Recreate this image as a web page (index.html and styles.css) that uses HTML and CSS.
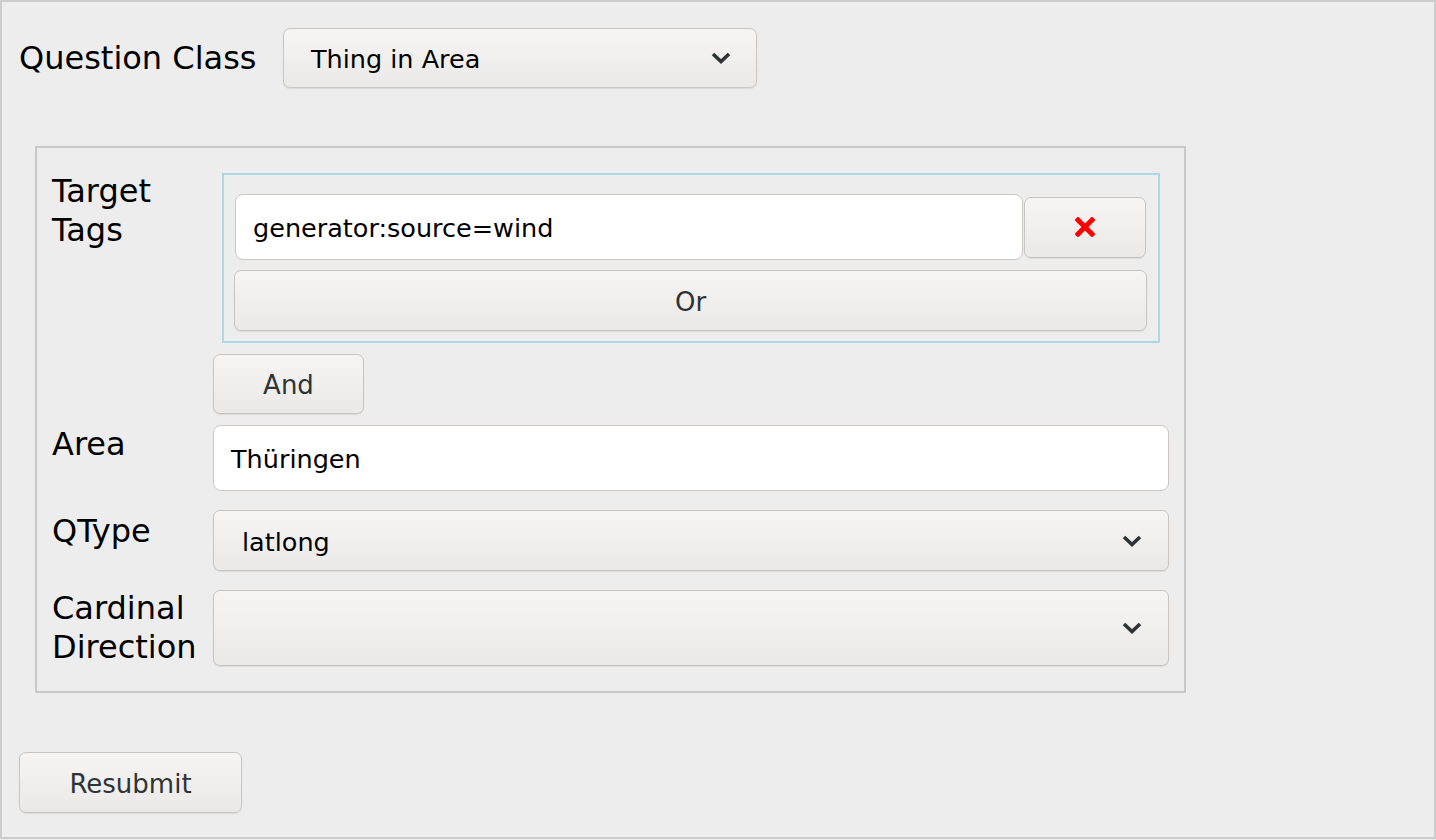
FILE: index.html
```html
<!DOCTYPE html>
<html>
<head>
<meta charset="utf-8">
<title>Question</title>
<link rel="stylesheet" href="styles.css">
</head>
<body>
<div class="window">
  <div class="top-row">
    <span class="label qc-label">Question Class</span>
    <div class="select qc-select">
      <span class="select-text">Thing in Area</span>
      <svg class="chevron" width="22" height="14" viewBox="0 0 22 14"><path d="M3 3 L11 10.5 L19 3" fill="none" stroke="#2e3436" stroke-width="3.6"/></svg>
    </div>
  </div>
  <div class="panel">
    <div class="form-grid">
      <div class="label lbl-tags">Target<br>Tags</div>
      <div class="tags-box">
        <div class="tag-row">
          <div class="field tag-field">generator:source=wind</div>
          <div class="btn del-btn">
            <svg width="20" height="20" viewBox="0 0 20 20"><path d="M3 3 L17 17 M17 3 L3 17" stroke="#ff0000" stroke-width="5" stroke-linecap="square" fill="none"/></svg>
          </div>
        </div>
        <div class="btn or-btn">Or</div>
      </div>
      <div class="spacer"></div>
      <div class="btn and-btn">And</div>
      <div class="label lbl-area">Area</div>
      <div class="field area-field">Thüringen</div>
      <div class="label lbl-qtype">QType</div>
      <div class="select wide-select qtype-select">
        <span class="select-text">latlong</span>
        <svg class="chevron" width="22" height="14" viewBox="0 0 22 14"><path d="M3 3 L11 10.5 L19 3" fill="none" stroke="#2e3436" stroke-width="3.6"/></svg>
      </div>
      <div class="label lbl-card">Cardinal<br>Direction</div>
      <div class="select wide-select card-select">
        <span class="select-text"></span>
        <svg class="chevron" width="22" height="14" viewBox="0 0 22 14"><path d="M3 3 L11 10.5 L19 3" fill="none" stroke="#2e3436" stroke-width="3.6"/></svg>
      </div>
    </div>
  </div>
  <div class="btn resubmit">Resubmit</div>
</div>
</body>
</html>
```
FILE: styles.css
```css
html, body {
  margin: 0;
  padding: 0;
  background: #ededed;
}
body {
  font-family: "DejaVu Sans", sans-serif;
  color: #000;
}
.window {
  box-sizing: border-box;
  width: 1436px;
  height: 839px;
  border: 2px solid #cdcdcd;
  background: #ededed;
  padding: 26px 0 0 17px;
}
.label {
  font-size: 32px;
  line-height: 39px;
  color: #000;
}
.top-row {
  display: flex;
  align-items: center;
  height: 60px;
}
.qc-label {
  width: 264px;
}
.select, .btn {
  box-sizing: border-box;
  border: 1px solid #c9c4bf;
  border-radius: 7px;
  background: linear-gradient(#f6f5f4, #ebe9e7);
  box-shadow: 0 1px 1px rgba(0,0,0,0.08);
  font-size: 25.5px;
}
.select {
  display: flex;
  align-items: center;
  justify-content: space-between;
  color: #000;
}
.qc-select {
  width: 474px;
  height: 60px;
  padding: 0 24px 0 27px;
}
.select-text {
  padding-top: 2px;
}
.chevron {
  display: block;
}
.btn {
  display: flex;
  align-items: center;
  justify-content: center;
  color: #2e3436;
  font-size: 26px;
  padding-top: 2px;
}
.field {
  box-sizing: border-box;
  display: flex;
  align-items: center;
  background: #fff;
  border: 1px solid #cdc8c3;
  border-radius: 8px;
  font-size: 25.5px;
  padding: 2px 0 0 17px;
  color: #000;
}
.panel {
  box-sizing: border-box;
  margin: 58px 0 0 16px;
  width: 1151px;
  border: 2px solid #c9c9c9;
  padding: 25px 16px 24px 15px;
}
.form-grid {
  display: grid;
  grid-template-columns: 161px 1fr;
  row-gap: 11px;
}
.lbl-tags { margin-top: -1px; }
.lbl-area { padding-top: 0; }
.lbl-qtype { padding-top: 2px; margin-top: 8px; }
.lbl-card { margin-top: 7px; }
.tags-box {
  box-sizing: border-box;
  margin: 0 9px 0 9px;
  border: 2px solid #add8e6;
  height: 170px;
  padding: 19px 11px 10px 11px;
  display: flex;
  flex-direction: column;
  gap: 10px;
}
.tag-row {
  display: flex;
  align-items: center;
  gap: 1px;
  height: 66px;
}
.tag-field {
  width: 788px;
  height: 66px;
}
.del-btn {
  width: 122px;
  height: 61px;
  margin-right: 1px;
  padding-top: 0;
}
.or-btn {
  height: 61px;
  margin-left: -1px;
}
.and-btn {
  width: 151px;
  height: 60px;
}
.area-field {
  height: 66px;
}
.wide-select {
  padding: 0 25px 0 28px;
}
.qtype-select {
  height: 61px;
  margin-top: 8px;
}
.card-select {
  height: 76px;
  margin-top: 8px;
}
.resubmit {
  width: 223px;
  height: 61px;
  margin: 59px 0 0 0;
}
```
